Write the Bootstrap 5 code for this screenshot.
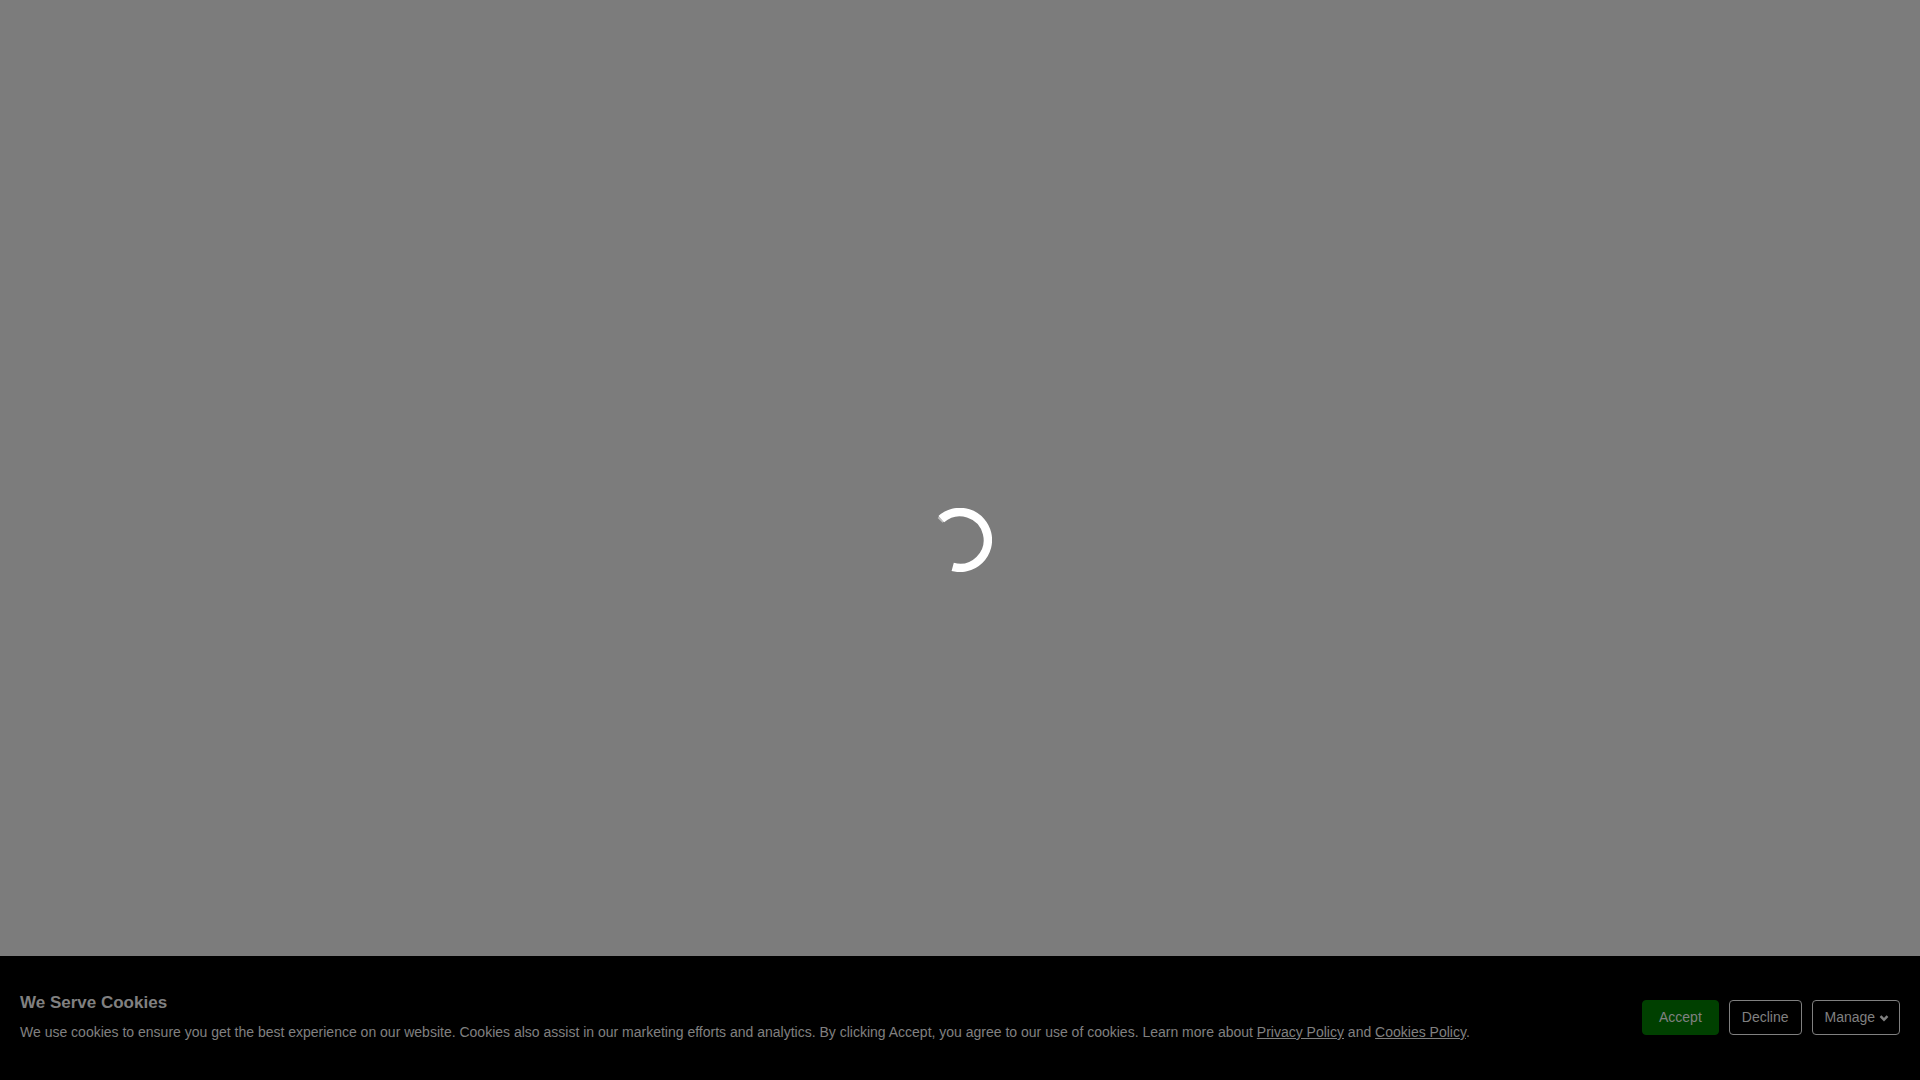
<!DOCTYPE html>
<html lang="en">
<head>
<meta charset="utf-8">
<meta name="viewport" content="width=device-width, initial-scale=1">
<title>Loading</title>
<link href="https://cdn.jsdelivr.net/npm/bootstrap@5.3.0/dist/css/bootstrap.min.css" rel="stylesheet">
<style>
  body { background: #7c7c7c; font-family: "Liberation Sans", Arial, sans-serif; font-size: 14px; line-height: 24px; color: #808080; }
  .loader { width: 64px; height: 64px; }
  .cookie-bar { background: #000; padding: 30px 20px 32px; min-height: 124px; }
  .cookie-title { font-size: 17px; line-height: 26px; font-weight: 700; }
  .cookie-bar a { color: inherit; }
  .cookie-actions { gap: 10px; }
  .cookie-btn { --bs-btn-font-size: 14px; --bs-btn-line-height: 21px; --bs-btn-padding-y: 6px; --bs-btn-padding-x: 12px; --bs-btn-border-radius: 4px; --bs-btn-color: #808080; --bs-btn-border-color: #808080; --bs-btn-hover-color: #a0a0a0; --bs-btn-hover-border-color: #a0a0a0; }
  .cookie-accept { --bs-btn-bg: #004000; --bs-btn-hover-bg: #005000; --bs-btn-border-color: #004000; --bs-btn-padding-x: 16px; }
</style>
<script src="https://cdn.jsdelivr.net/npm/bootstrap@5.3.0/dist/js/bootstrap.bundle.min.js" defer></script>
</head>
<body>
<div class="loader position-fixed top-50 start-50 translate-middle" role="status" aria-label="Loading">
  <svg class="d-block" width="64" height="64" viewBox="0 0 64 64" fill="none" stroke="#fff" stroke-width="8.500" aria-hidden="true">
    <path d="M13.300 11.200A27.900 27.900 0 1 1 24.700 58.900"/>
    <path d="M12.100 12.400l1.300-1.300" stroke-opacity=".5" stroke-width="7"/>
  </svg>
</div>
<section class="cookie-bar fixed-bottom d-flex align-items-center justify-content-between gap-4" aria-labelledby="cookie-title">
  <div>
    <h2 id="cookie-title" class="cookie-title mb-1">We Serve Cookies</h2>
    <p class="mb-0">We use cookies to ensure you get the best experience on our website. Cookies also assist in our marketing efforts and analytics. By clicking Accept, you agree to our use of cookies. Learn more about <a href="#privacy">Privacy Policy</a> and <a href="#cookies">Cookies Policy</a>.</p>
  </div>
  <div class="cookie-actions d-flex flex-shrink-0">
    <button type="button" class="btn cookie-btn cookie-accept">Accept</button>
    <button type="button" class="btn cookie-btn">Decline</button>
    <button type="button" class="btn cookie-btn">Manage <svg class="overflow-visible" width="8" height="8" viewBox="0 0 8 8" fill="none" stroke="currentColor" stroke-width="2.400" aria-hidden="true"><path d="M1.500 2.200L5 5.700l3.500-3.500"/></svg></button>
  </div>
</section>
</body>
</html>
